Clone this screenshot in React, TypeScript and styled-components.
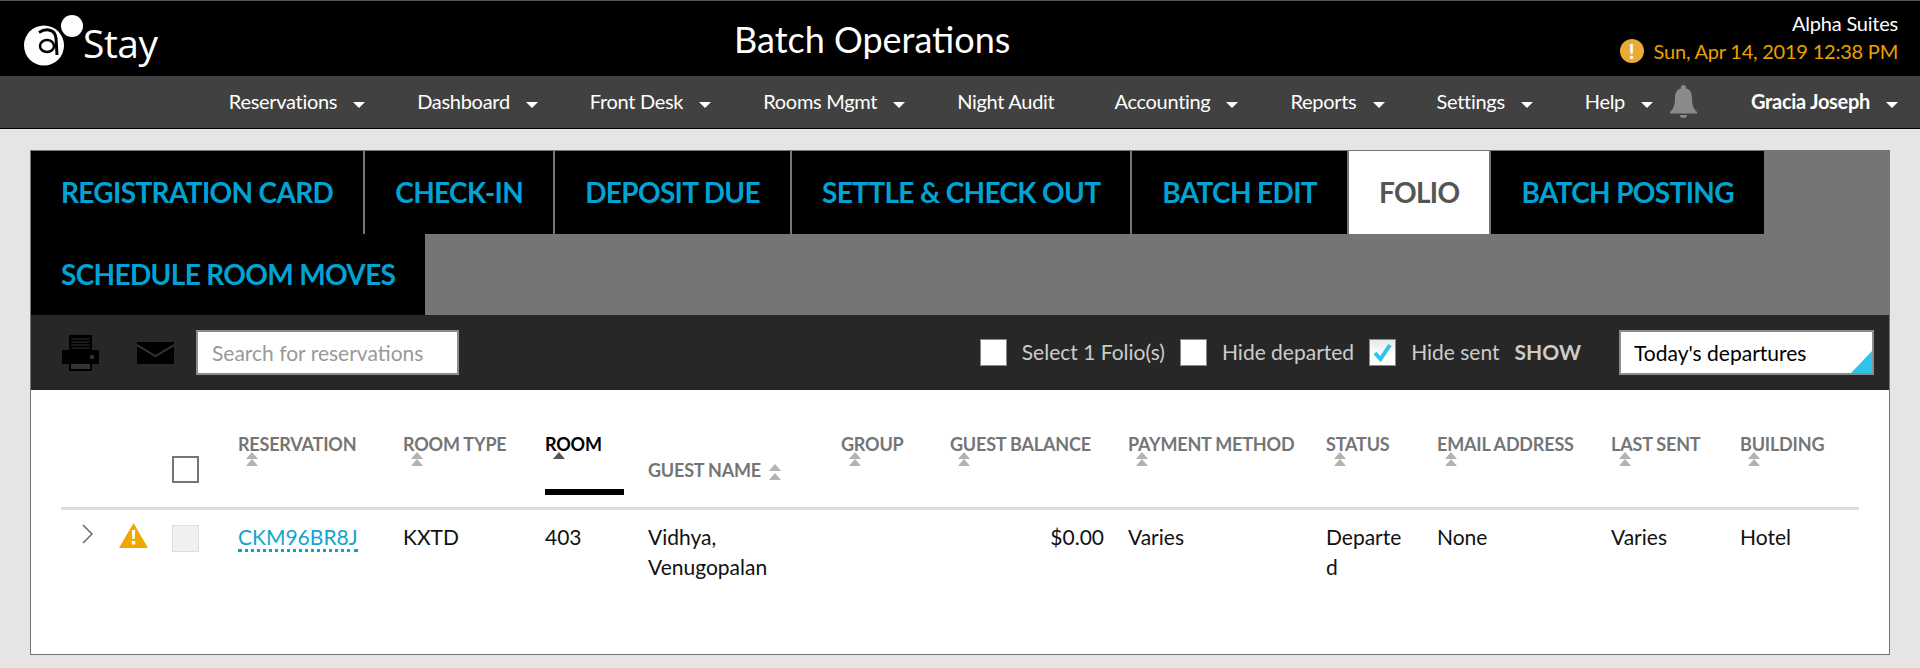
import styled, { createGlobalStyle } from "styled-components";

const COLUMNS = "58px 53px 66px 165px 142px 103px 193px 109px 178px 198px 111px 174px 129px 118px";

const GlobalStyle = createGlobalStyle`
  html, body {
    margin: 0;
    padding: 0;
    background: #e5e5e5;
    font-family: "Lato", "Liberation Sans", sans-serif;
  }
`;

const Page = styled.div`
  height: 668px;
  overflow: hidden;
`;

const TopBar = styled.header`
  display: grid;
  grid-template-columns: 734px auto 1fr;
  align-items: center;
  height: 75px;
  background: #000;
  border-top: 1px solid #555;
`;

const Brand = styled.div`
  display: flex;
  align-items: flex-start;
  padding-left: 24px;
`;

const BrandName = styled.span`
  margin: 8px 0 0 -1px;
  font-family: "Open Sans", sans-serif;
  font-size: 39px;
  line-height: 52px;
  letter-spacing: -0.5px;
  color: #fff;
`;

const Title = styled.h1`
  margin: 0;
  font-size: 36px;
  font-weight: 400;
  color: #fff;
`;

const Property = styled.div`
  display: flex;
  flex-direction: column;
  align-items: flex-end;
  margin-top: -4px;
  padding-right: 22px;
  font-size: 20px;
  line-height: 28px;
  letter-spacing: -0.22px;
  color: #fff;
`;

const BusinessDate = styled.div`
  display: flex;
  align-items: center;
  gap: 10px;
  color: #e9a100;
`;

const AlertDot = styled.span`
  display: flex;
  align-items: center;
  justify-content: center;
  width: 24px;
  height: 24px;
  border-radius: 50%;
  background: #e8ab35;
  font-size: 20px;
  font-weight: 900;
  color: #fff;
`;

const NavBar = styled.nav`
  display: flex;
  align-items: center;
  justify-content: flex-end;
  box-sizing: content-box;
  height: 50px;
  padding: 0 22px 2px 0;
  background: #414141;
  border-bottom: 1px solid #000;
`;

const NavItem = styled.a<{ $gap?: number; $bold?: boolean }>`
  display: flex;
  align-items: center;
  gap: 16px;
  margin-right: ${(p) => p.$gap ?? 52}px;
  font-size: 20px;
  font-weight: ${(p) => (p.$bold ? 700 : 400)};
  letter-spacing: -0.3px;
  color: #fff;
`;

const Caret = styled.span`
  width: 0;
  height: 0;
  margin-top: 8px;
  border-left: 6px solid transparent;
  border-right: 6px solid transparent;
  border-top: 6px solid #fff;
`;

const Panel = styled.main`
  display: flex;
  flex-direction: column;
  height: 503px;
  margin: 21px 30px 0;
  background: #fff;
  border: 1px solid #757575;
`;

const TabStrip = styled.div`
  background: #757575;
`;

const TabRow = styled.div<{ $height: number }>`
  display: flex;
  height: ${(p) => p.$height}px;
`;

const Tab = styled.a<{ $active?: boolean; $last?: boolean }>`
  display: flex;
  align-items: center;
  padding: 0 30px 2px;
  background: ${(p) => (p.$active ? "#fff" : "#000")};
  border-right: ${(p) => (p.$last ? "none" : "2px solid #757575")};
  font-size: 28px;
  font-weight: 700;
  letter-spacing: -0.65px;
  color: ${(p) => (p.$active ? "#555" : "#00a3d3")};
`;

const Toolbar = styled.div`
  display: flex;
  align-items: center;
  height: 75px;
  padding: 0 15px 0 31px;
  background: #272727;
`;

const ToolIcon = styled.svg<{ $gap: number }>`
  display: block;
  margin-right: ${(p) => p.$gap}px;
`;

const SearchInput = styled.input`
  box-sizing: border-box;
  width: 263px;
  height: 45px;
  padding: 0 14px;
  background: #fff;
  border: 2px solid #8c8c8c;
  font-family: inherit;
  font-size: 21px;
  outline: none;

  &::placeholder {
    color: #999;
    opacity: 1;
  }
`;

const Filters = styled.div`
  display: flex;
  align-items: center;
  margin-left: auto;
`;

const FilterCheck = styled.span<{ $checked?: boolean }>`
  display: flex;
  align-items: center;
  justify-content: center;
  box-sizing: border-box;
  width: 27px;
  height: 27px;
  margin-right: 15px;
  background: ${(p) => (p.$checked ? "linear-gradient(#e8e8e8, #fff 60%)" : "#fff")};
  border: 1px solid #888;
`;

const FilterLabel = styled.span`
  margin: 0 15px 2px 0;
  font-size: 21px;
  color: #ccc;
`;

const ShowLabel = styled.span`
  margin: 0 38px 2px 0;
  font-size: 21px;
  font-weight: 700;
  color: #ccc;
`;

const ViewSelect = styled.div`
  position: relative;
  box-sizing: border-box;
  display: flex;
  align-items: center;
  width: 255px;
  height: 45px;
  padding: 0 13px;
  background: #fff;
  border: 2px solid #8c8c8c;
  font-size: 21px;
  color: #000;

  &::after {
    content: "";
    position: absolute;
    right: 0;
    bottom: 0;
    border-left: 21px solid transparent;
    border-bottom: 22px solid #2cc4ea;
  }
`;

const TableWrap = styled.div`
  margin: 0 30px;
`;

const HeadRow = styled.div`
  display: grid;
  grid-template-columns: ${COLUMNS};
  box-sizing: border-box;
  height: 120px;
  padding: 43px 0 12px;
  border-bottom: 3px solid #ddd;
`;

const HeadCell = styled.div<{ $active?: boolean }>`
  font-size: 18px;
  font-weight: 700;
  line-height: 22px;
  letter-spacing: -0.2px;
  white-space: nowrap;
  color: ${(p) => (p.$active ? "#000" : "#757575")};
`;

const RoomHead = styled(HeadCell)`
  box-sizing: border-box;
  width: 79px;
  border-bottom: 6px solid #000;
`;

const GuestHead = styled(HeadCell)`
  display: flex;
  gap: 8px;
  margin-top: 26px;
`;

const SortArrow = styled.i<{ $dark?: boolean }>`
  display: block;
  width: 0;
  height: 0;
  border-left: 6px solid transparent;
  border-right: 6px solid transparent;
  border-bottom: 7px solid ${(p) => (p.$dark ? "#555" : "#b2b2b2")};
`;

const SortStack = styled.span`
  display: block;
  margin: -3px 0 0 8px;
  width: 12px;
`;

const SortInline = styled.span`
  display: flex;
  flex-direction: column;
  gap: 2px;
  margin-top: 5px;
`;

const HeadCheckbox = styled.span`
  display: block;
  box-sizing: border-box;
  width: 27px;
  height: 27px;
  margin-top: 23px;
  border: 2px solid #757575;
`;

const BodyRow = styled.div`
  display: grid;
  grid-template-columns: ${COLUMNS};
  padding-top: 12px;
`;

const Cell = styled.div<{ $right?: boolean; $pad?: number }>`
  padding-right: ${(p) => p.$pad ?? 24}px;
  font-size: 21px;
  line-height: 30px;
  text-align: ${(p) => (p.$right ? "right" : "left")};
  overflow-wrap: anywhere;
  color: #111;
`;

const Expander = styled.svg`
  display: block;
  margin: 2px 0 0 21px;
`;

const WarnIcon = styled.svg`
  display: block;
  margin-top: 1px;
`;

const RowCheckbox = styled.span`
  display: block;
  box-sizing: border-box;
  width: 27px;
  height: 27px;
  margin-top: 3px;
  background: #f0f0f0;
  border: 1px solid #ddd;
`;

const ResLink = styled.a`
  display: inline-block;
  margin-top: 3px;
  line-height: 24px;
  border-bottom: 3px dotted #05a3cf;
  color: #12a5cf;
`;

const NAV = [
  { label: "Reservations" },
  { label: "Dashboard" },
  { label: "Front Desk" },
  { label: "Rooms Mgmt" },
  { label: "Night Audit", noMenu: true },
  { label: "Accounting" },
  { label: "Reports" },
  { label: "Settings" },
];

const HEADS = ["GROUP", "GUEST BALANCE", "PAYMENT METHOD", "STATUS", "EMAIL ADDRESS", "LAST SENT", "BUILDING"];

function SortableHead({ label }: { label: string }) {
  return (
    <HeadCell>
      {label}
      <SortStack>
        <SortArrow />
        <SortArrow />
      </SortStack>
    </HeadCell>
  );
}

function Logo() {
  return (
    <svg width="60" height="51" viewBox="24 7 60 51" style={{ marginTop: 6 }}>
      <circle cx="44" cy="37.5" r="20" fill="#fff" />
      <circle cx="72" cy="18" r="11" fill="#fff" />
      <path d="M39 24.500C46 20 55 21 56 30L57 47" fill="none" stroke="#000" strokeWidth="3" />
      <ellipse cx="47" cy="38" rx="7" ry="6" fill="#fff" stroke="#000" strokeWidth="2.500" />
    </svg>
  );
}

function App() {
  return (
    <Page>
      <GlobalStyle />
      <TopBar>
        <Brand>
          <Logo />
          <BrandName>Stay</BrandName>
        </Brand>
        <Title>Batch Operations</Title>
        <Property>
          <span>Alpha Suites</span>
          <BusinessDate>
            <AlertDot>!</AlertDot>
            Sun, Apr 14, 2019 12:38 PM
          </BusinessDate>
        </Property>
      </TopBar>
      <NavBar>
        {NAV.map((item) => (
          <NavItem key={item.label} $gap={item.noMenu ? 60 : 52}>
            {item.label}
            {!item.noMenu && <Caret />}
          </NavItem>
        ))}
        <NavItem $gap={17}>
          Help
          <Caret />
        </NavItem>
        <svg width="27" height="33" viewBox="0 0 27 33" style={{ marginRight: 54 }}>
          <path
            d="M13.5 0a2.6 2.6 0 0 1 2.5 3.4C20.500 4.500 22 8.500 22 13c0 5 .8 10.500 5 14v1.500H0V27c4.200-3.500 5-9 5-14 0-4.500 1.500-8.500 6-9.600A2.600 2.600 0 0 1 13.500 0zM10 30h7a3.500 3 0 0 1-7 0z"
            fill="#8a8a8a"
          />
        </svg>
        <NavItem $gap={0} $bold>
          Gracia Joseph
          <Caret />
        </NavItem>
      </NavBar>
      <Panel>
        <TabStrip>
          <TabRow $height={83}>
            <Tab>REGISTRATION CARD</Tab>
            <Tab>CHECK-IN</Tab>
            <Tab>DEPOSIT DUE</Tab>
            <Tab>SETTLE &amp; CHECK OUT</Tab>
            <Tab>BATCH EDIT</Tab>
            <Tab $active>FOLIO</Tab>
            <Tab $last>BATCH POSTING</Tab>
          </TabRow>
          <TabRow $height={81}>
            <Tab $last>SCHEDULE ROOM MOVES</Tab>
          </TabRow>
        </TabStrip>
        <Toolbar>
          <ToolIcon $gap={38} width="37" height="36" viewBox="0 0 37 36">
            <path d="M7 0h23v15H7z" fill="#000" />
            <path d="M9.500 4h18M9.500 7h18M9.500 10h18M9.500 13h18" stroke="#333" strokeWidth="1" />
            <path d="M0 15h37v14H0z" fill="#000" />
            <circle cx="30" cy="22" r="2.200" fill="#333" />
            <path d="M7 27h23v9H7z" fill="#000" />
            <path d="M9 29h19v5H9z" fill="#333" />
          </ToolIcon>
          <ToolIcon $gap={22} width="37" height="22" viewBox="0 0 37 22">
            <path d="M0 0h37v22H0z" fill="#000" />
            <path d="M0 3l18.500 11L37 3" fill="none" stroke="#333" strokeWidth="2" />
          </ToolIcon>
          <SearchInput placeholder="Search for reservations" readOnly />
          <Filters>
            <FilterCheck />
            <FilterLabel>Select 1 Folio(s)</FilterLabel>
            <FilterCheck />
            <FilterLabel>Hide departed</FilterLabel>
            <FilterCheck $checked>
              <svg width="19" height="19" viewBox="0 0 19 19">
                <path d="M2 10l5.500 6L17 2" fill="none" stroke="#2cc4ea" strokeWidth="4" />
              </svg>
            </FilterCheck>
            <FilterLabel>Hide sent</FilterLabel>
            <ShowLabel>SHOW</ShowLabel>
            <ViewSelect>Today's departures</ViewSelect>
          </Filters>
        </Toolbar>
        <TableWrap>
          <HeadRow>
            <div />
            <div />
            <HeadCheckbox />
            <SortableHead label="RESERVATION" />
            <SortableHead label="ROOM TYPE" />
            <RoomHead $active>
              ROOM
              <SortStack>
                <SortArrow $dark />
              </SortStack>
            </RoomHead>
            <GuestHead>
              GUEST NAME
              <SortInline>
                <SortArrow />
                <SortArrow />
              </SortInline>
            </GuestHead>
            {HEADS.map((label) => (
              <SortableHead key={label} label={label} />
            ))}
          </HeadRow>
          <BodyRow>
            <div>
              <Expander width="11" height="20" viewBox="0 0 11 20">
                <path d="M1 1l9 9-9 9" fill="none" stroke="#666" strokeWidth="1.500" />
              </Expander>
            </div>
            <div>
              <WarnIcon width="29" height="25" viewBox="0 0 29 25">
                <path d="M14.500 0L29 25H0z" fill="#f0a800" />
                <path d="M12.800 7h3.400l-.6 9h-2.200zM12.800 18h3.400v3.400h-3.400z" fill="#fff" />
              </WarnIcon>
            </div>
            <div>
              <RowCheckbox />
            </div>
            <Cell>
              <ResLink>CKM96BR8J</ResLink>
            </Cell>
            <Cell>KXTD</Cell>
            <Cell>403</Cell>
            <Cell>Vidhya, Venugopalan</Cell>
            <Cell />
            <Cell $right>$0.00</Cell>
            <Cell>Varies</Cell>
            <Cell $pad={30}>Departed</Cell>
            <Cell>None</Cell>
            <Cell>Varies</Cell>
            <Cell>Hotel</Cell>
          </BodyRow>
        </TableWrap>
      </Panel>
    </Page>
  );
}

export default App;
